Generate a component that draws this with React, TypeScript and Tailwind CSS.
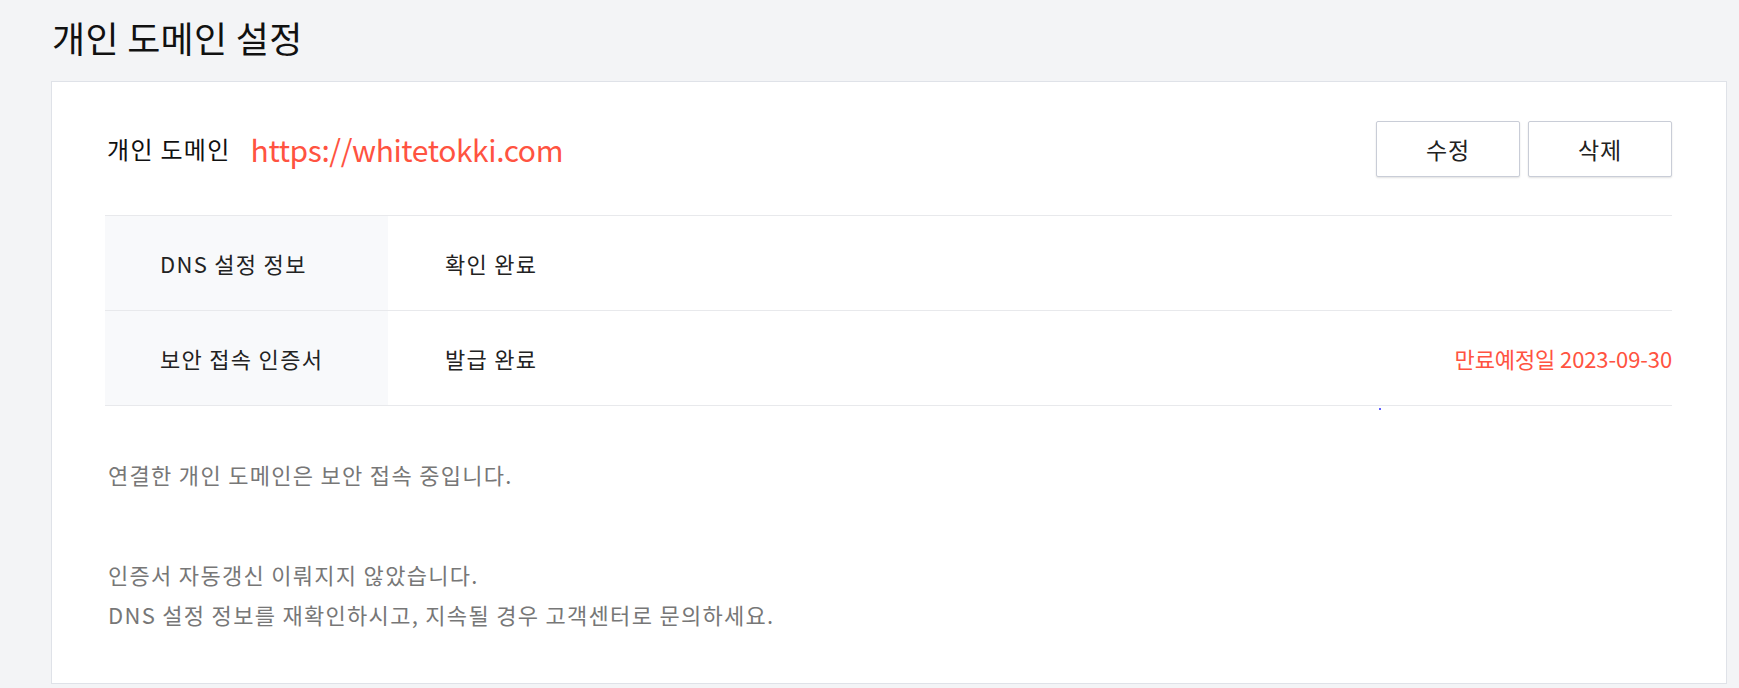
import React from "react";

const rows = [
  { label: "DNS 설정 정보", value: "확인 완료", extra: "" },
  { label: "보안 접속 인증서", value: "발급 완료", extra: "만료예정일 2023-09-30" },
];

export default function App() {
  return (
    <div className="relative min-h-[688px] bg-[#f3f4f6] pl-[51px] pr-[12px] pt-[12px] font-['Noto_Sans_CJK_KR',sans-serif]">
      {/* Page title */}
      <h1 className="h-[69px] pl-[1px] text-[36px] leading-[50px] tracking-[0.3px] text-[#111111]">개인 도메인 설정</h1>

      {/* Card */}
      <div className="border border-[#dfe2e8] bg-white pl-[53px] pr-[54px] pt-[39px] pb-[49px]">
        <div className="flex items-center justify-between">
          <div className="flex items-center gap-[20px] pl-[2px]">
            <span className="text-[24px] tracking-[1.3px] text-[#111111]">개인 도메인</span>
            <span className="text-[30px] tracking-[-0.4px] text-[#ff5341]">https://whitetokki.com</span>
          </div>
          <div className="flex gap-[8px]">
            <button className="h-[56px] w-[144px] rounded-[2px] border border-[#c9cdd7] bg-white text-[23px] tracking-[0.8px] text-[#222222] shadow-[0_1px_2px_rgba(0,0,0,0.12)]">
              수정
            </button>
            <button className="h-[56px] w-[144px] rounded-[2px] border border-[#c9cdd7] bg-white text-[23px] tracking-[0.8px] text-[#222222] shadow-[0_1px_2px_rgba(0,0,0,0.12)]">
              삭제
            </button>
          </div>
        </div>

        {/* Status table */}
        <div className="mt-[38px] border-t border-[#e8e9ec] text-[22px] tracking-[1.3px] text-[#222222]">
          {rows.map((row) => (
            <div key={row.label} className="flex h-[95px] border-b border-[#e8e9ec]">
              <div className="flex w-[283px] items-center bg-[#f8f9fb] pl-[55px]">{row.label}</div>
              <div className="flex flex-1 items-center justify-between pl-[57px]">
                <span>{row.value}</span>
                {row.extra && <span className="tracking-[-0.1px] text-[#ff5341]">{row.extra}</span>}
              </div>
            </div>
          ))}
        </div>

        {/* Notes */}
        <div className="mt-[48px] pl-[3px] text-[22px] leading-[40px] tracking-[1.3px] text-[#777777]">
          <p>연결한 개인 도메인은 보안 접속 중입니다.</p>
          <p className="mt-[60px]">인증서 자동갱신 이뤄지지 않았습니다.</p>
          <p>DNS 설정 정보를 재확인하시고, 지속될 경우 고객센터로 문의하세요.</p>
        </div>
      </div>

      <span className="absolute left-[1379px] top-[408px] h-[2px] w-[2px] rounded-full bg-[#2a2aff]" />
    </div>
  );
}
